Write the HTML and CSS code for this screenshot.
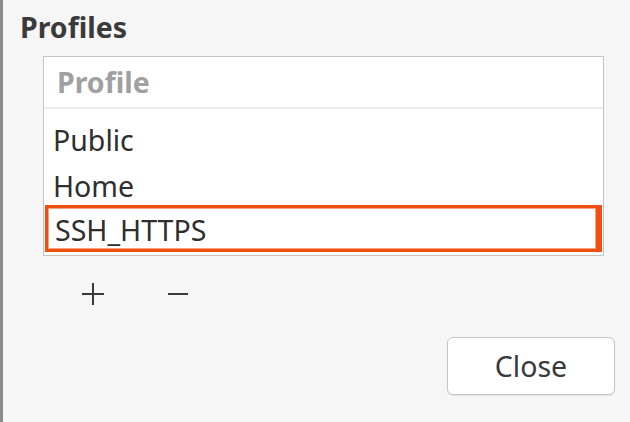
FILE: index.html
```html
<!DOCTYPE html>
<html>
<head>
<meta charset="utf-8">
<link rel="stylesheet" href="styles.css">
</head>
<body>
<div class="dialog">
  <h1 class="title">Profiles</h1>
  <div class="table">
    <div class="header">Profile</div>
    <div class="rows">
      <div class="row">Public</div>
      <div class="row">Home</div>
      <div class="row selected">SSH_HTTPS</div>
    </div>
  </div>
  <div class="tools">
    <button class="tool" aria-label="Add">
      <svg width="24" height="24" viewBox="0 0 24 24"><path d="M12 1v22M1 12h22" stroke="#3a3a3a" stroke-width="2" fill="none"/></svg>
    </button>
    <button class="tool" aria-label="Remove">
      <svg width="24" height="24" viewBox="0 0 24 24"><path d="M2 12h20" stroke="#3a3a3a" stroke-width="2" fill="none"/></svg>
    </button>
  </div>
  <div class="footer">
    <button class="close">Close</button>
  </div>
</div>
</body>
</html>
```

FILE: styles.css
```css
html, body {
  margin: 0;
  padding: 0;
  height: 100%;
}
body {
  background: #f6f6f6;
  font-family: "Noto Sans", "Open Sans", "DejaVu Sans", sans-serif;
  color: #333333;
  overflow: hidden;
}
.dialog {
  height: 100%;
  box-sizing: border-box;
  border-left: 3px solid #8c8c8c;
  padding: 8px 0 0 17px;
}
.title {
  margin: 0;
  font-size: 28.5px;
  font-weight: 700;
  line-height: 38px;
  color: #3a3a3a;
  letter-spacing: 0;
}
.table {
  margin: 10px 0 0 23px;
  width: 559px;
  height: 198px;
  background: #ffffff;
  border: 1px solid #c3c3c3;
}
.header {
  height: 50px;
  border-bottom: 2px solid #ebebeb;
  box-sizing: content-box;
  padding-left: 13px;
  font-size: 28.5px;
  font-weight: 700;
  line-height: 50px;
  color: #a0a0a0;
}
.rows {
  padding-top: 4px;
}
.row {
  height: 46px;
  line-height: 54px;
  padding-left: 9px;
  font-size: 28.5px;
  color: #2e2e2e;
}
.row.selected {
  height: 47px;
  line-height: 45px;
  box-sizing: border-box;
  border: 3px solid #f04e12;
  border-right-width: 6px;
  box-shadow: inset 0 0 0 1px #f8a27e;
  padding-left: 7px;
  margin: 0 1px 0 1px;
}
.tools {
  display: flex;
  gap: 61px;
  margin: 26px 0 0 61px;
}
.tool {
  background: none;
  border: none;
  padding: 0;
  width: 24px;
  height: 24px;
  display: flex;
}
.footer {
  display: flex;
  justify-content: flex-end;
  padding-right: 15px;
  margin-top: 31px;
}
.close {
  width: 168px;
  height: 58px;
  background: #ffffff;
  border: 1px solid #c6c6c6;
  border-radius: 6px;
  box-shadow: 0 1px 1px rgba(0,0,0,0.08);
  font-family: "Noto Sans", "Open Sans", "DejaVu Sans", sans-serif;
  font-size: 28.5px;
  color: #3a3a3a;
  padding: 0;
  line-height: 56px;
}
```
